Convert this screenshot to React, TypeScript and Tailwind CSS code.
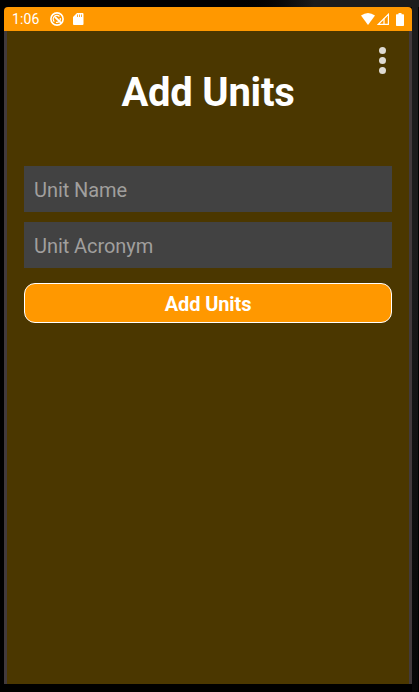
import React from 'react';

function StatusBar() {
  return (
    <header className="flex h-6 items-center rounded-t-[4px] bg-[#ff9800] pl-2 pr-2 text-white">
      <span className="w-[38px] text-[14px] leading-6 tracking-[0.1px]">1:06</span>
      <svg className="h-[14px] w-[14px]" viewBox="0 0 14 14" fill="none" stroke="currentColor">
        <circle cx="7" cy="7" r="6.100" strokeWidth="1.600" />
        <path d="M4.300 9.600A3.500 3.500 0 0 1 9.500 4.500M10.300 6.200A3.500 3.500 0 0 1 6 10.300" strokeWidth="1.300" />
        <path d="M5 5 11.600 11.400" strokeWidth="1.800" />
      </svg>
      <svg className="ml-[9px] h-3 w-[11px]" viewBox="0 0 11 12">
        <path d="M4 0h5.600q.9 0 .9.900v10.200q0 .9-.9.900H.9Q0 12 0 11.100V4Z" fill="currentColor" />
        <path d="M4.500 1.500v2.500M6.500 1.500v2.500M8.500 1.500v2.500" stroke="#ff9800" strokeWidth=".8" />
      </svg>
      <svg className="ml-auto h-3 w-[14px]" viewBox="0 0 14 12">
        <path d="M0 2.500Q7-2.500 14 2.500L7 12Z" fill="currentColor" />
      </svg>
      <svg className="ml-[2px] h-3 w-3" viewBox="0 0 12 12">
        <path d="M11.400 1.300V11.400H1.300Z" fill="none" stroke="currentColor" strokeWidth="1.200" />
        <path d="M7 5.500V11.500" stroke="currentColor" strokeWidth="1.200" />
      </svg>
      <svg className="ml-[7px] h-[13px] w-2" viewBox="0 0 8 13">
        <path d="M2.500 0h3v1.300H7.300q.7 0 .7.700v10.300q0 .7-.7.700H.7Q0 13 0 12.300V2q0-.7.7-.7H2.500Z" fill="currentColor" />
      </svg>
    </header>
  );
}

function UnitField({ label }: { label: string }) {
  return (
    <input
      type="text"
      placeholder={label}
      aria-label={label}
      className="block h-[46px] w-full bg-[#424242] px-[10px] pt-[1px] text-[20px] tracking-[-0.06px] text-white outline-none placeholder:text-[#a09f9d] placeholder:opacity-100"
    />
  );
}

export default function App() {
  return (
    <div className="flex h-[692px] w-[419px] flex-col bg-black font-['Roboto',sans-serif]">
      <div className="h-[7px] shrink-0 bg-linear-to-r from-black from-55% to-[#1c1c1c] to-75%" />
      <div className="flex h-[685px]">
        <div className="ml-1 flex h-[677px] w-[408px] flex-col">
          <StatusBar />
          <main className="relative flex-1 border-l-[3px] border-r-[3px] border-[#423a3c] bg-[#4b3700] pl-[17px] pr-[17px]">
            <button aria-label="More options" className="absolute right-[23px] top-4 flex w-[7px] flex-col items-center gap-[3px]">
              <span className="h-[7px] w-[7px] rounded-full bg-[#dedad2]" />
              <span className="h-[7px] w-[7px] rounded-full bg-[#dedad2]" />
              <span className="h-[7px] w-[7px] rounded-full bg-[#dedad2]" />
            </button>
            <h1 className="pt-[38px] text-center text-[40px] font-bold leading-[48px] tracking-[-0.25px] text-white">Add Units</h1>
            <form className="mt-[49px] flex flex-col gap-[10px]">
              <UnitField label="Unit Name" />
              <UnitField label="Unit Acronym" />
              <button type="button" className="mt-[5px] h-10 rounded-[11px] border border-white bg-[#ff9800] pt-[2px] text-center text-[20px] font-bold leading-none tracking-[-0.12px] text-white">
                Add Units
              </button>
            </form>
          </main>
        </div>
        <div className="w-[6px] bg-linear-to-b from-[#1c1c1c] from-35% to-[#070707]" />
      </div>
    </div>
  );
}
